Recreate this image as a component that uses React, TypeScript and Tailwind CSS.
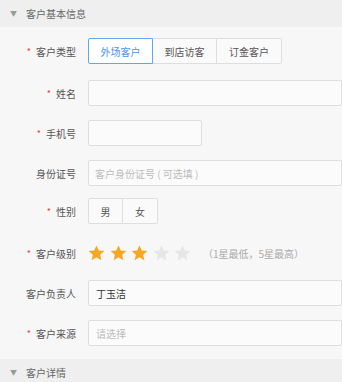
const font = { fontFamily: '"Noto Sans CJK SC", "Noto Sans", sans-serif' }

function Label({ text, required }: { text: string; required?: boolean }) {
  return (
    <div className="w-[76px] shrink-0 flex items-center justify-end text-[10px] text-[#555]">
      {required && <span className="text-[#e8412c] text-[9px] mr-[5px] leading-none">*</span>}
      {text}
    </div>
  )
}

function SectionHeader({ title }: { title: string }) {
  return (
    <div className="h-[27px] bg-[#efefef] flex items-center pl-[10px] text-[10px] text-[#666] shrink-0">
      <span className="text-[7px] text-[#999] mr-[9px]">▼</span>
      {title}
    </div>
  )
}

function StarIcon({ on }: { on: boolean }) {
  return (
    <svg width="17" height="16" viewBox="0 0 24 23">
      <polygon
        points="12,0.8 15.3,8 23.2,8.7 17.2,14 19,21.8 12,17.7 5,21.8 6.8,14 0.8,8.7 8.7,8"
        fill={on ? '#f5a623' : '#e6e6e6'}
      />
    </svg>
  )
}

export default function App() {
  const level = 3
  return (
    <div style={font} className="w-[342px] h-[382px] overflow-hidden bg-[#f7f7f7] flex flex-col">
      <SectionHeader title="客户基本信息" />
      <div className="flex flex-col gap-[14px] pt-[11px]">
        <div className="flex items-center h-[26px]">
          <Label text="客户类型" required />
          <div className="ml-3 flex h-[26px] text-[10px]">
            <button className="w-[65px] border border-[#62a7f2] bg-white text-[#4d94e6] rounded-l-[2px]">外场客户</button>
            <button className="w-[64px] border-y border-r border-[#dedede] bg-[#fafafa] text-[#555]">到店访客</button>
            <button className="w-[65px] border-y border-r border-[#dedede] bg-[#fafafa] text-[#555] rounded-r-[2px]">订金客户</button>
          </div>
        </div>
        <div className="flex items-center h-[26px] mt-[2px]">
          <Label text="姓名" required />
          <div className="ml-3 w-[270px] h-[26px] border border-[#dedede] bg-[#fbfbfb] rounded-[2px]" />
        </div>
        <div className="flex items-center h-[26px]">
          <Label text="手机号" required />
          <div className="ml-3 w-[114px] h-[26px] border border-[#dedede] bg-[#fbfbfb] rounded-[2px]" />
        </div>
        <div className="flex items-center h-[26px]">
          <Label text="身份证号" />
          <div className="ml-3 w-[270px] h-[26px] border border-[#dedede] bg-[#fbfbfb] rounded-[2px] flex items-center pl-[6px] text-[10px] text-[#bbb]">
            客户身份证号 ( 可选填 )
          </div>
        </div>
        <div className="flex items-center h-[26px] -mt-[2px]">
          <Label text="性别" required />
          <div className="ml-3 flex h-[26px] text-[10px] text-[#555]">
            <button className="w-[35px] border border-[#dedede] bg-[#fafafa] rounded-l-[2px]">男</button>
            <button className="w-[35px] border-y border-r border-[#dedede] bg-[#fafafa] rounded-r-[2px]">女</button>
          </div>
        </div>
        <div className="flex items-center h-[26px] mt-[2px]">
          <Label text="客户级别" required />
          <div className="ml-3 flex items-center gap-[4.5px]">
            {[1, 2, 3, 4, 5].map((i) => (
              <StarIcon key={i} on={i <= level} />
            ))}
          </div>
          <span className="ml-[12px] text-[10px] text-[#aaa]">（1星最低，5星最高）</span>
        </div>
        <div className="flex items-center h-[26px]">
          <Label text="客户负责人" />
          <div className="ml-3 w-[270px] h-[26px] border border-[#dedede] bg-[#fbfbfb] rounded-[2px] flex items-center pl-[7px] text-[10px] text-[#333]">
            丁玉洁
          </div>
        </div>
        <div className="flex items-center h-[26px]">
          <Label text="客户来源" required />
          <div className="ml-3 w-[270px] h-[26px] border border-[#dedede] bg-[#fbfbfb] rounded-[2px] flex items-center pl-[7px] text-[10px] text-[#bbb]">
            请选择
          </div>
        </div>
      </div>
      <div className="mt-[13px]">
        <SectionHeader title="客户详情" />
      </div>
    </div>
  )
}
